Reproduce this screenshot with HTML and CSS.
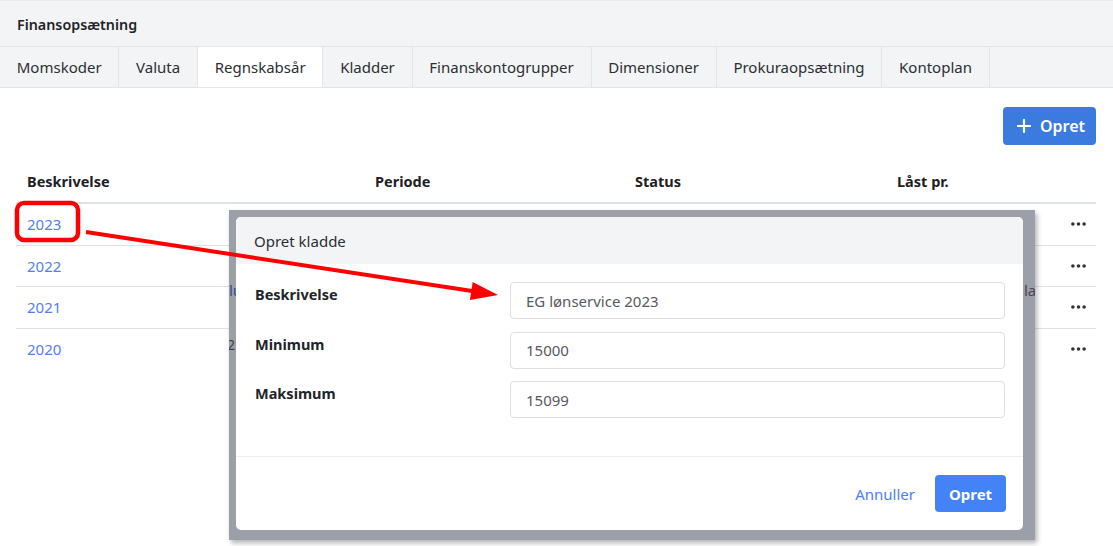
FILE: index.html
```html
<!DOCTYPE html>
<html lang="da">
<head>
<meta charset="utf-8">
<title>Finansopsætning</title>
<link rel="stylesheet" href="styles.css">
</head>
<body>
<header class="topbar"><span class="title">Finansopsætning</span></header>
<nav class="tabs">
  <a class="tab">Momskoder</a>
  <a class="tab">Valuta</a>
  <a class="tab active">Regnskabsår</a>
  <a class="tab">Kladder</a>
  <a class="tab">Finanskontogrupper</a>
  <a class="tab">Dimensioner</a>
  <a class="tab">Prokuraopsætning</a>
  <a class="tab">Kontoplan</a>
</nav>
<main class="content">
  <div class="toolbar">
    <button class="btn-create"><svg class="plus" viewBox="0 0 14 14" width="14" height="14"><path d="M7 1v12M1 7h12" stroke="#fff" stroke-width="2.2" stroke-linecap="round"/></svg>Opret</button>
  </div>
  <div class="table">
    <div class="row head"><div class="cell">Beskrivelse</div><div class="cell">Periode</div><div class="cell">Status</div><div class="cell">Låst pr.</div><div class="cell"></div></div>
    <div class="row"><div class="cell"><a class="link">2023</a></div><div class="cell"></div><div class="cell"></div><div class="cell"></div><div class="cell dots"><svg viewBox="0 0 16 4" width="15" height="4"><circle cx="2" cy="2" r="1.9"/><circle cx="8" cy="2" r="1.9"/><circle cx="14" cy="2" r="1.9"/></svg></div></div>
    <div class="row"><div class="cell"><a class="link">2022</a></div><div class="cell"></div><div class="cell"></div><div class="cell"></div><div class="cell dots"><svg viewBox="0 0 16 4" width="15" height="4"><circle cx="2" cy="2" r="1.9"/><circle cx="8" cy="2" r="1.9"/><circle cx="14" cy="2" r="1.9"/></svg></div></div>
    <div class="row"><div class="cell"><a class="link">2021</a></div><div class="cell"></div><div class="cell"></div><div class="cell"></div><div class="cell dots"><svg viewBox="0 0 16 4" width="15" height="4"><circle cx="2" cy="2" r="1.9"/><circle cx="8" cy="2" r="1.9"/><circle cx="14" cy="2" r="1.9"/></svg></div></div>
    <div class="row last"><div class="cell"><a class="link">2020</a></div><div class="cell"></div><div class="cell"></div><div class="cell"></div><div class="cell dots"><svg viewBox="0 0 16 4" width="15" height="4"><circle cx="2" cy="2" r="1.9"/><circle cx="8" cy="2" r="1.9"/><circle cx="14" cy="2" r="1.9"/></svg></div></div>
  </div>
</main>

<div class="modal-frame">
  <span class="frag frag-lu">lu</span>
  <span class="frag frag-2">2:</span>
  <span class="frag frag-la">la</span>
  <div class="modal">
    <div class="modal-header">Opret kladde</div>
    <div class="modal-body">
      <label class="label">Beskrivelse</label>
      <div class="input">EG lønservice 2023</div>
      <label class="label">Minimum</label>
      <div class="input">15000</div>
      <label class="label">Maksimum</label>
      <div class="input">15099</div>
    </div>
    <div class="modal-footer">
      <a class="cancel">Annuller</a>
      <button class="btn-primary">Opret</button>
    </div>
  </div>
</div>

<svg class="annotation" width="1113" height="546" viewBox="0 0 1113 546">
  <rect x="17" y="203" width="61" height="37" rx="7" ry="7" fill="none" stroke="#ff0000" stroke-width="4.5"/>
  <line x1="86" y1="232" x2="472" y2="291" stroke="#ff0000" stroke-width="4"/>
  <polygon points="498,295 472.7,282 469.9,300" fill="#ff0000"/>
</svg>
</body>
</html>
```
FILE: styles.css
```css
* { box-sizing: border-box; }
html, body { margin: 0; padding: 0; }
body {
  width: 1113px;
  height: 546px;
  overflow: hidden;
  background: #fff;
  font-family: "Noto Sans", "Open Sans", sans-serif;
  font-size: 15px;
  color: #212529;
  position: relative;
}
.topbar {
  height: 46px;
  background: #f3f4f6;
  border-top: 1px solid #e8eaed;
  display: flex;
  align-items: center;
  padding: 2px 17px 0;
}
.title { font-size: 14.3px; font-weight: 600; color: #1f2328; }
.tabs {
  display: flex;
  height: 42px;
  background: #f3f4f6;
  border-top: 1px solid #e3e5e8;
  border-bottom: 1px solid #e3e5e8;
}
.tab {
  display: flex;
  align-items: center;
  padding: 0 16.75px;
  border-right: 1px solid #e3e5e8;
  color: #2b2f33;
  font-size: 15px;
}
.tab.active { background: #fff; }
.content { padding: 19px 17px 0 16px; }
.toolbar { display: flex; justify-content: flex-end; }
.btn-create {
  display: flex;
  align-items: center;
  gap: 9px;
  height: 38px;
  width: 93px;
  padding: 0 14px;
  border: 0;
  border-radius: 4px;
  background: #3b7be0;
  color: #fff;
  font-family: inherit;
  font-size: 16px;
  font-weight: 600;
}
.plus { flex: none; }
.table { margin-top: 15px; }
.row {
  display: grid;
  grid-template-columns: 348px 260px 262px 1fr 44px;
  height: 41.5px;
  border-bottom: 1px solid #dee2e6;
  align-items: center;
}
.row.head {
  height: 44px;
  border-bottom: 2px solid #dee2e6;
  font-weight: 700;
  font-size: 14.5px;
  color: #1d2125;
}
.row.last { border-bottom: 0; }
.cell { padding: 0 11px; }
.link { color: #5280ef; }
.dots { display: flex; justify-content: flex-end; padding: 0 10px 0 0; }
.dots svg { fill: #333; }

.modal-frame {
  position: absolute;
  left: 229px;
  top: 210px;
  width: 806px;
  height: 330px;
  background: #9b9fa7;
  box-shadow: 2px 3px 5px rgba(0,0,0,0.3);
  padding: 7px 0 0 7px;
  overflow: hidden;
}
.frag { position: absolute; font-size: 15px; line-height: 20px; }
.frag-lu { left: 0; top: 70px; color: #2f4f8f; }
.frag-2 { left: -2px; top: 125px; color: #3a3f48; font-size: 14px; }
.frag-la { left: 795px; top: 70px; color: #4a4452; }
.modal {
  position: relative;
  width: 787px;
  height: 313px;
  background: #fff;
  border-radius: 5px;
  overflow: hidden;
  display: flex;
  flex-direction: column;
}
.modal-header {
  height: 47px;
  background: #f3f4f6;
  display: flex;
  align-items: center;
  padding: 0 18px;
  font-size: 15px;
  color: #2a2e33;
}
.modal-body {
  display: grid;
  grid-template-columns: 255px 1fr;
  row-gap: 12.5px;
  padding: 18px 18px 38px 19px;
}
.label {
  font-weight: 700;
  font-size: 14.5px;
  line-height: 22px;
  padding-top: 1px;
  color: #212529;
}
.input {
  height: 37px;
  border: 1px solid #dcdfe3;
  border-radius: 4px;
  padding: 0 15px;
  display: flex;
  align-items: center;
  color: #555a60;
  font-size: 15px;
}
.modal-footer {
  border-top: 1px solid #eceef0;
  display: flex;
  justify-content: flex-end;
  align-items: center;
  gap: 20px;
  padding: 18px 17px 18px;
}
.cancel { color: #4a80f5; font-size: 15px; }
.btn-primary {
  height: 37px;
  width: 71px;
  border: 0;
  border-radius: 4px;
  background: #4383f7;
  color: #fff;
  font-family: inherit;
  font-size: 15px;
  font-weight: 700;
}
.annotation {
  position: absolute;
  left: 0;
  top: 0;
  pointer-events: none;
}
```
